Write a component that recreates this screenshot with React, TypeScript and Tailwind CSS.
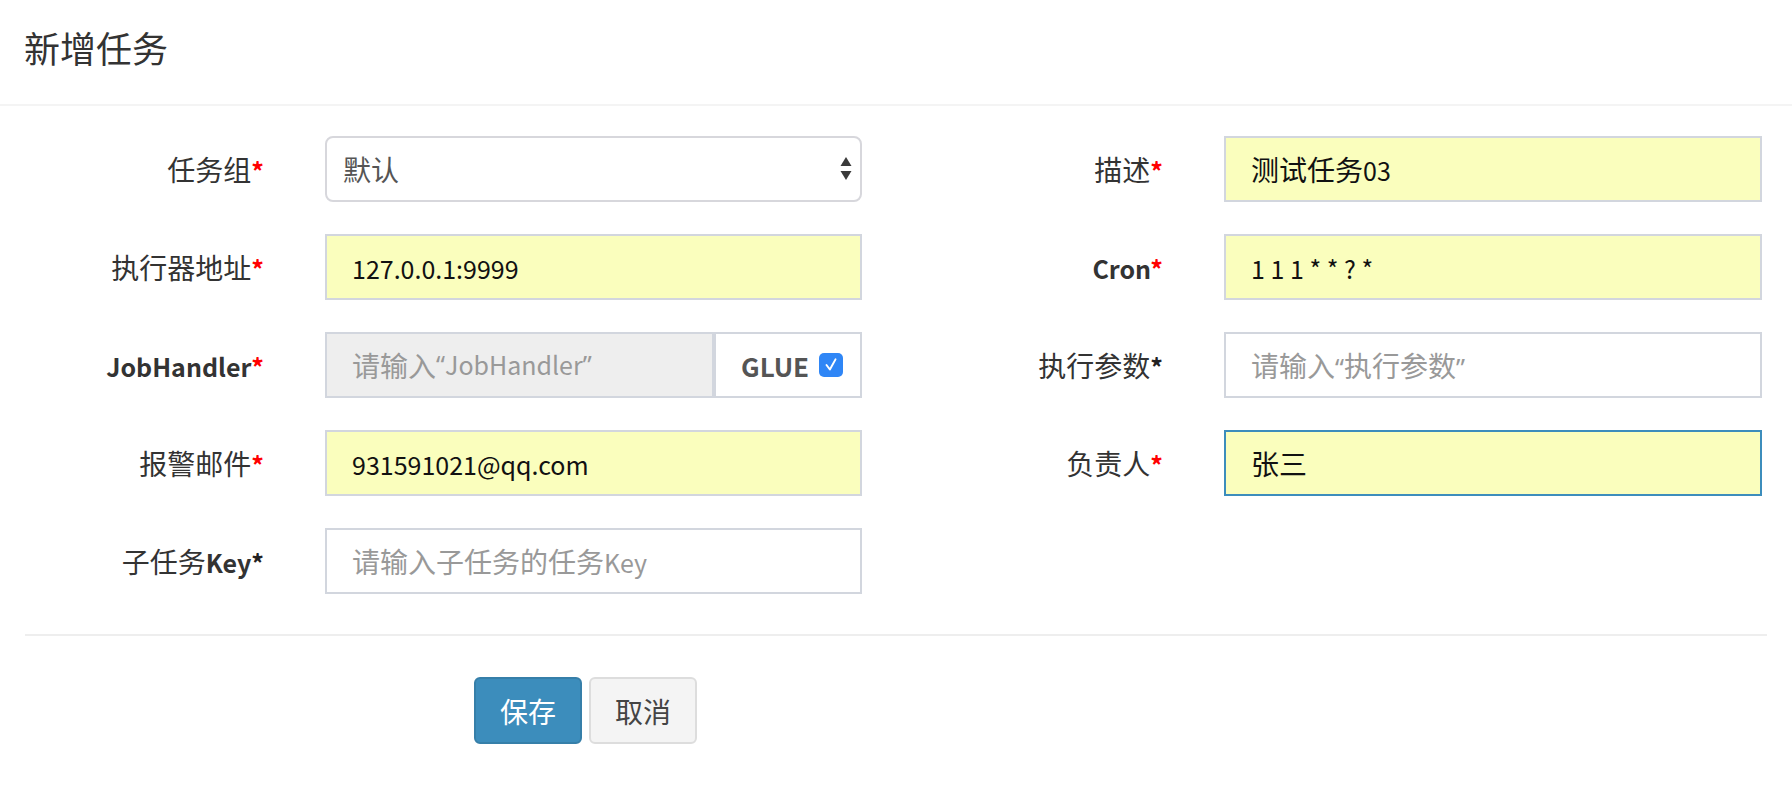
import type { ReactNode } from "react";

// Noto Sans CJK's Latin glyphs run wide, so Latin runs are set a bit smaller
// to match the narrower Source Sans look of the original.
function T({ s }: { s: string }) {
  const parts = s.match(/[\u4e00-\u9fff]+|[“”]|[^\u4e00-\u9fff“”]+/g) ?? [];
  return (
    <>
      {parts.map((p, i) =>
        /[\u4e00-\u9fff]/.test(p) ? (
          <span key={i}>{p}</span>
        ) : /[“”]/.test(p) ? (
          <span key={i} className="font-['Noto_Sans',sans-serif] text-[25px]">
            {p}
          </span>
        ) : (
          <span key={i} className="text-[25px]">
            {p}
          </span>
        ),
      )}
    </>
  );
}

function Star({ red = true }: { red?: boolean }) {
  return <b className={`text-[25px] ${red ? "text-[#ff0000]" : "text-[#222]"}`}>*</b>;
}

function Label({ children }: { children: ReactNode }) {
  return (
    <div className="flex h-[66px] items-center justify-end pr-[31px] text-[28px] text-[#333]">
      <span>{children}</span>
    </div>
  );
}

function TextField({
  value,
  placeholder,
  filled = false,
  focused = false,
}: {
  value?: string;
  placeholder?: string;
  filled?: boolean;
  focused?: boolean;
}) {
  return (
    <div className="px-[30px]">
      <div
        className={`flex h-[66px] items-center border-2 px-[25px] text-[28px] ${
          filled ? "bg-[#fafebd]" : "bg-white"
        } ${focused ? "border-[#3c8dbc]" : "border-[#d2d6de]"} ${
          value ? "text-[#111]" : "text-[#999]"
        }`}
      >
        <span className="whitespace-pre">
          <T s={value ?? placeholder ?? ""} />
        </span>
      </div>
    </div>
  );
}

function GroupSelect() {
  return (
    <div className="px-[30px]">
      <div className="flex h-[66px] items-center justify-between rounded-[8px] border-2 border-[#d7d7dc] bg-white pl-[16px] pr-[8px] text-[28px] text-[#555]">
        <span>默认</span>
        <svg width="12" height="26" viewBox="0 0 12 26" className="text-[#3a3a3a]">
          <path d="M6 1 L11.5 10 L0.5 10 Z" fill="currentColor" />
          <path d="M0.5 15 L11.5 15 L6 24 Z" fill="currentColor" />
        </svg>
      </div>
    </div>
  );
}

function HandlerField() {
  return (
    <div className="px-[30px]">
      <div className="flex h-[66px] border-2 border-[#d2d6de]">
        <div className="flex min-w-0 flex-1 items-center bg-[#eeeeee] px-[25px] text-[28px] text-[#999]">
          <T s="请输入“JobHandler”" />
        </div>
        <div className="flex w-[148px] items-center gap-[10px] border-l-[4px] border-[#d2d6de] bg-white pl-[25px] text-[26px] font-bold text-[#555]">
          <span>GLUE</span>
          <span className="flex h-[24px] w-[24px] items-center justify-center rounded-[5px] bg-[#2f86f6]">
            <svg width="18" height="18" viewBox="0 0 24 24" fill="none">
              <path
                d="M6 12 L10.5 18 L18 4.5"
                stroke="white"
                strokeWidth="2.6"
                strokeLinecap="round"
                strokeLinejoin="round"
              />
            </svg>
          </span>
        </div>
      </div>
    </div>
  );
}

export default function App() {
  return (
    <div className="h-[806px] w-full overflow-hidden bg-white font-['Noto_Sans_CJK_SC','Noto_Sans',sans-serif]">
      <div className="flex h-[106px] items-center border-b-2 border-[#f4f4f4] px-[24px]">
        <h4 className="pb-[10px] text-[36px] font-normal text-[#333]">新增任务</h4>
      </div>

      <form className="pt-[30px]">
        <div className="grid grid-cols-[295px_597px_302px_598px] gap-y-[32px]">
          <Label>
            任务组
            <Star />
          </Label>
          <GroupSelect />
          <Label>
            描述
            <Star />
          </Label>
          <TextField value="测试任务03" filled />

          <Label>
            执行器地址
            <Star />
          </Label>
          <TextField value="127.0.0.1:9999" filled />
          <Label>
            <b className="text-[25px]">Cron</b>
            <Star />
          </Label>
          <TextField value="1 1 1 * * ? *" filled />

          <Label>
            <b className="text-[25px]">JobHandler</b>
            <Star />
          </Label>
          <HandlerField />
          <Label>
            执行参数
            <Star red={false} />
          </Label>
          <TextField placeholder="请输入“执行参数”" />

          <Label>
            报警邮件
            <Star />
          </Label>
          <TextField value="931591021@qq.com" filled />
          <Label>
            负责人
            <Star />
          </Label>
          <TextField value="张三" filled focused />

          <Label>
            子任务<b className="text-[25px]">Key</b>
            <Star red={false} />
          </Label>
          <TextField placeholder="请输入子任务的任务Key" />
        </div>

        <hr className="mx-[25px] mt-[40px] border-t-2 border-[#eeeeee]" />

        <div className="ml-[474px] mt-[41px] flex gap-[7px]">
          <button
            type="button"
            className="h-[67px] rounded-[6px] border-2 border-[#367fa9] bg-[#3c8dbc] px-[24px] text-[28px] text-white"
          >
            保存
          </button>
          <button
            type="button"
            className="h-[67px] rounded-[6px] border-2 border-[#dddddd] bg-[#f4f4f4] px-[24px] text-[28px] text-[#444]"
          >
            取消
          </button>
        </div>
      </form>
    </div>
  );
}
